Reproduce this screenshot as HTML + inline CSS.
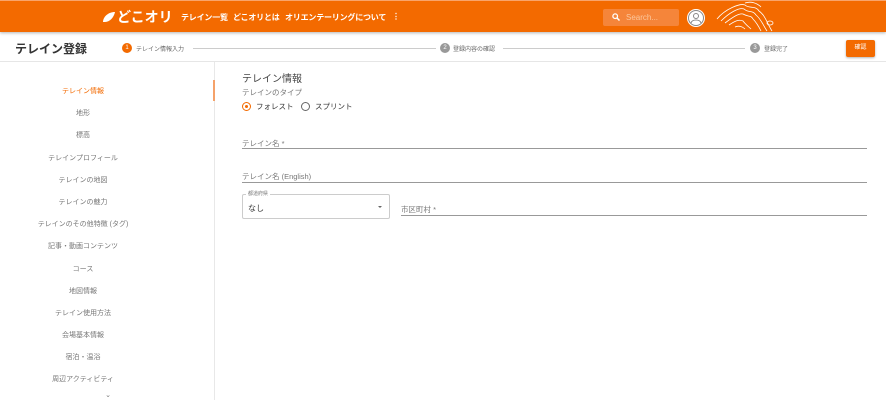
<!DOCTYPE html>
<html><head><meta charset="utf-8"><style>
*{box-sizing:border-box;margin:0;padding:0}
body{width:886px;height:400px;overflow:hidden;background:#fff;font-family:"Liberation Sans","Noto Sans CJK JP",sans-serif;position:relative;color:#333}
.hdr{position:absolute;left:0;top:0;width:886px;height:32px;background:#f36a00;border-top:1px solid #f9a46a;box-shadow:0 1px 3px rgba(0,0,0,.3)}
.abs{position:absolute;white-space:nowrap}
.nav{color:#fff;font-size:8px;font-weight:bold;top:11px;letter-spacing:-0.2px}
.sub{position:absolute;top:32px;left:0;width:886px;height:30px;border-bottom:1px solid #e6e6e6}
.step{position:absolute;top:43px;width:10px;height:10px;border-radius:50%;color:#fff;font-size:6px;text-align:center;line-height:10px;font-family:"Liberation Sans",sans-serif}
.st{position:absolute;top:44px;font-size:6px;color:#666;white-space:nowrap}
.line{position:absolute;top:48px;height:1px;background:#ccc}
.side{position:absolute;left:0;top:62px;width:215px;height:338px;border-right:1px solid #e8e8e8}
.side div{position:absolute;left:0;width:166px;text-align:center;font-size:7px;color:#777;white-space:nowrap}
.lbl{position:absolute;font-size:7.5px;color:#777;white-space:nowrap}
.ul{position:absolute;left:242px;width:625px;height:1px;background:#999}
</style></head><body>
<div class="hdr">
 <svg class="abs" style="left:102px;top:10px" width="14" height="12" viewBox="0 0 14 12"><path d="M1 11 C1 6 6 1 13 1 C12 6 8 11 3 11 Z" fill="#fff"/></svg>
 <div class="abs" style="left:117px;top:6px;color:#fff;font-size:14px;font-weight:bold">どこオリ</div>
 <div class="abs nav" style="left:181px">テレイン一覧</div>
 <div class="abs nav" style="left:233px">どこオリとは</div>
 <div class="abs nav" style="left:285px">オリエンテーリングについて</div>
 <div class="abs nav" style="left:392px">⋮</div>
 <div class="abs" style="left:603px;top:8px;width:76px;height:17px;background:#f5853a;border-radius:2px"></div>
 <svg class="abs" style="left:612px;top:12px" width="8" height="8" viewBox="0 0 8 8"><circle cx="3.2" cy="3.2" r="2.3" stroke="#fff" stroke-width="1.3" fill="none"/><path d="M5 5 L7.5 7.5" stroke="#fff" stroke-width="1.5"/></svg>
 <div class="abs" style="left:626px;top:12px;color:#fbc79e;font-size:8px">Search...</div>
 <svg class="abs" style="left:686px;top:7px" width="20" height="20" viewBox="0 0 20 20"><circle cx="10" cy="10" r="9" fill="#fff"/><circle cx="10" cy="10" r="7.5" fill="none" stroke="#888" stroke-width="1"/><circle cx="10" cy="8" r="2.5" fill="none" stroke="#888"/><path d="M5 15 C6 11 14 11 15 15" fill="none" stroke="#888"/></svg>
 <svg class="abs" style="left:715px;top:0" width="70" height="32" viewBox="0 0 70 32" fill="none" stroke="#fff" stroke-width="0.8"><path d="M2 18 C10 8 25 2 30 4 C34 8 40 4 44 10 C50 14 52 22 57 30"/><path d="M6 20 C14 12 24 6 29 8 C33 12 38 9 41 14 C46 18 48 24 52 30"/><path d="M10 22 C18 16 24 12 28 13 C33 16 36 14 38 18 C42 22 44 26 46 30"/><path d="M14 24 C20 20 24 18 28 20 C31 24 34 26 36 28"/><path d="M20 26 C24 24 28 26 30 28"/><path d="M30 2 C36 0 42 2 46 6"/><ellipse cx="55" cy="22" rx="3" ry="2"/></svg>
</div>
<div class="sub"></div>
<div class="abs" style="left:15px;top:40px;font-size:12px;font-weight:bold;color:#333">テレイン登録</div>
<div class="step" style="left:122px;background:#f36a00">1</div>
<div class="st" style="left:136px">テレイン情報入力</div>
<div class="line" style="left:193px;width:243px"></div>
<div class="step" style="left:440px;background:#999">2</div>
<div class="st" style="left:453px">登録内容の確認</div>
<div class="line" style="left:503px;width:242px"></div>
<div class="step" style="left:750px;background:#999">3</div>
<div class="st" style="left:764px">登録完了</div>
<div class="abs" style="left:846px;top:40px;width:29px;height:17px;background:#f36a00;border-radius:2px;color:#fff;font-size:6px;text-align:center;line-height:17px;box-shadow:0 1px 2px rgba(0,0,0,.3)">確認</div>
<div class="side">
 <div style="top:24px;color:#f36a00">テレイン情報</div>
 <div style="top:46px">地形</div>
 <div style="top:68px">標高</div>
 <div style="top:91px">テレインプロフィール</div>
 <div style="top:113px">テレインの地図</div>
 <div style="top:135px">テレインの魅力</div>
 <div style="top:157px">テレインのその他特徴 (タグ)</div>
 <div style="top:179px">記事・動画コンテンツ</div>
 <div style="top:202px">コース</div>
 <div style="top:224px">地図情報</div>
 <div style="top:246px">テレイン使用方法</div>
 <div style="top:268px">会場基本情報</div>
 <div style="top:290px">宿泊・温浴</div>
 <div style="top:312px">周辺アクティビティ</div>
 <div style="top:329px;left:25px">⌄</div>
</div>
<div class="abs" style="left:213px;top:80px;width:2px;height:21px;background:#f5a26a"></div>
<div class="abs" style="left:242px;top:70px;font-size:10px;color:#444">テレイン情報</div>
<div class="lbl" style="left:242px;top:87px">テレインのタイプ</div>
<div class="abs" style="left:242px;top:102px;width:9px;height:9px;border:1.3px solid #f36a00;border-radius:50%"><div style="position:absolute;left:1.5px;top:1.5px;width:3.5px;height:3.5px;background:#f36a00;border-radius:50%"></div></div>
<div class="abs" style="left:256px;top:101px;font-size:7.5px;color:#333">フォレスト</div>
<div class="abs" style="left:301px;top:102px;width:9px;height:9px;border:1.3px solid #666;border-radius:50%"></div>
<div class="abs" style="left:315px;top:101px;font-size:7.5px;color:#333">スプリント</div>
<div class="lbl" style="left:242px;top:138px">テレイン名 *</div>
<div class="ul" style="top:148px"></div>
<div class="lbl" style="left:242px;top:171px">テレイン名 (English)</div>
<div class="ul" style="top:182px"></div>
<div class="abs" style="left:242px;top:194px;width:148px;height:25px;border:1px solid #ccc;border-radius:2px"></div>
<div class="abs" style="left:246px;top:190px;background:#fff;padding:0 2px;font-size:5px;color:#777">都道府県</div>
<div class="abs" style="left:248px;top:203px;font-size:8px;color:#333">なし</div>
<div class="abs" style="left:378px;top:206px;border-left:2.5px solid transparent;border-right:2.5px solid transparent;border-top:2.5px solid #666"></div>
<div class="lbl" style="left:401px;top:204px">市区町村 *</div>
<div class="abs" style="left:401px;top:215px;width:466px;height:1px;background:#999"></div>
</body></html>
